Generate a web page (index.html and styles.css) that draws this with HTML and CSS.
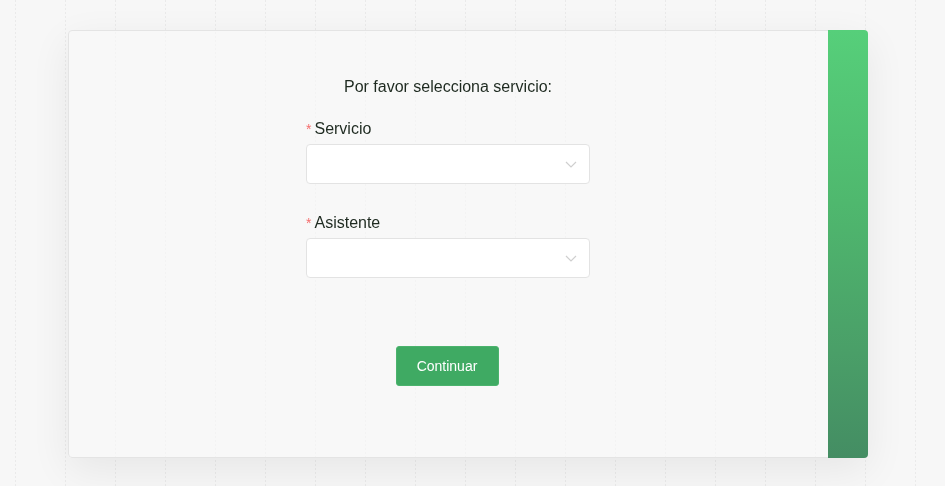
FILE: index.html
```html
<!DOCTYPE html>
<html lang="es">
<head>
    <meta charset="UTF-8">
    <meta name="viewport" content="width=device-width, initial-scale=1.0">
    <title>Seleccionar servicio</title>
    <link rel="stylesheet" href="styles.css">
</head>
<body>
    <div class="card">
        <div class="card-body">
            <p class="intro">Por favor selecciona servicio:</p>

            <div class="field">
                <label class="field-label"><span class="req">*</span>Servicio</label>
                <div class="select">
                    <svg class="chevron" width="12" height="7" viewBox="0 0 12 7"><path d="M1 1l5 5 5-5" fill="none" stroke="#cfcfcf" stroke-width="1.2"/></svg>
                </div>
            </div>

            <div class="field">
                <label class="field-label"><span class="req">*</span>Asistente</label>
                <div class="select">
                    <svg class="chevron" width="12" height="7" viewBox="0 0 12 7"><path d="M1 1l5 5 5-5" fill="none" stroke="#cfcfcf" stroke-width="1.2"/></svg>
                </div>
            </div>

            <div class="actions">
                <button class="btn">Continuar</button>
            </div>
        </div>
        <div class="card-side"></div>
    </div>
</body>
</html>
```
FILE: styles.css
```css
html, body {
    height: 100%;
}
body {
    font-family: "Liberation Sans", Arial, sans-serif;
    margin: 0;
    padding: 30px 77px 28px 68px;
    box-sizing: border-box;
    background-color: #f7f7f7;
}
/* dashed vertical guide lines */
body::before {
    content: "";
    position: fixed;
    top: 0;
    left: 0;
    right: 0;
    bottom: 0;
    z-index: -1;
    background: repeating-linear-gradient(90deg, transparent 0 15px, #eaeaea 15px 16px, transparent 16px 50px);
    -webkit-mask-image: repeating-linear-gradient(180deg, #000 0 2px, transparent 2px 4px);
    mask-image: repeating-linear-gradient(180deg, #000 0 2px, transparent 2px 4px);
}
.card {
    display: flex;
    height: 428px;
    background-color: rgba(248, 248, 248, 0.6);
    border: 1px solid #e4e4e4;
    border-radius: 4px;
    box-shadow: 0 12px 40px rgba(0, 0, 0, 0.07);
    box-sizing: border-box;
}
.card-body {
    flex: 1;
    display: flex;
    flex-direction: column;
    align-items: center;
    padding-top: 46px;
    padding-right: 1px;
}
.card-side {
    width: 40px;
    margin: -1px -1px -1px 0;
    border-radius: 0 4px 4px 0;
    background: linear-gradient(180deg, #56cf7a 0%, #4fb86e 40%, #4a9f68 75%, #448d63 100%);
}
.intro {
    margin: 0 0 22px;
    font-size: 16px;
    line-height: 20px;
    color: #1e2a20;
}
.field {
    width: 284px;
    margin-bottom: 29px;
}
.field-label {
    display: block;
    font-size: 16px;
    line-height: 20px;
    color: #1e2a20;
    margin-bottom: 5px;
}
.req {
    color: #f56c6c;
    font-size: 14px;
    margin-right: 3px;
}
.select {
    position: relative;
    height: 40px;
    background: #fff;
    border: 1px solid #e3e3e3;
    border-radius: 4px;
    box-sizing: border-box;
}
.chevron {
    position: absolute;
    right: 12px;
    top: 16px;
}
.actions {
    margin-top: 39px;
    padding-right: 2px;
}
.btn {
    width: 103px;
    height: 40px;
    font-family: inherit;
    font-size: 14px;
    color: #fff;
    background-color: #3faa63;
    border: 1px solid #4bb36d;
    border-radius: 3px;
    cursor: pointer;
}
```
